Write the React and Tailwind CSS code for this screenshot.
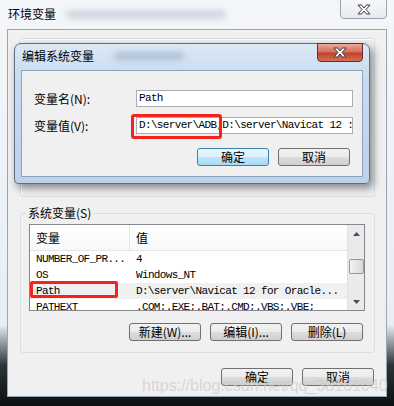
const CJK = "font-['Noto_Sans_CJK_SC',sans-serif]";
const MONO = "font-['Liberation_Mono',monospace] text-[11px] tracking-[-0.65px]";

const ROWS = [
  { name: "NUMBER_OF_PR...", value: "4" },
  { name: "OS", value: "Windows_NT" },
  { name: "Path", value: "D:\\server\\Navicat 12 for Oracle...", hl: true },
  { name: "PATHEXT", value: ".COM;.EXE;.BAT;.CMD;.VBS;.VBE;" },
];

function CloseX() {
  return (
    <svg width="14" height="11" viewBox="0 0 14 11">
      <path
        d="M1 1 H4.5 L7 4 L9.5 1 H13 L9 5.5 L13 10 H9.5 L7 7 L4.5 10 H1 L5 5.5 Z"
        fill="#fff"
        stroke="#3b3b3b"
        strokeWidth="1"
        strokeLinejoin="round"
      />
    </svg>
  );
}

function Btn({ children, focused, className = "" }) {
  return (
    <div
      className={`h-[18px] w-[72px] flex items-center justify-center rounded-[3px] border text-[12px] leading-none text-black ${CJK} ${
        focused
          ? "border-[#3c7fb1] bg-[linear-gradient(to_bottom,#eaf6fd_0%,#d9f0fc_50%,#bee6fd_51%,#a7d9f5_100%)]"
          : "border-[#707070] bg-[linear-gradient(to_bottom,#f2f2f2_0%,#ebebeb_50%,#dddddd_51%,#cfcfcf_100%)]"
      } ${className}`}
    >
      {children}
    </div>
  );
}

function Field({ label, value }) {
  return (
    <div className="flex items-center h-[17px]">
      <span className={`pl-[12px] w-[114px] text-[12px] leading-none text-black ${CJK}`}>{label}</span>
      <div className={`w-[217px] h-[17px] border border-[#abadb3] bg-white flex items-center pl-[2px] overflow-hidden whitespace-nowrap text-black ${MONO}`}>
        {value}
      </div>
    </div>
  );
}

function EditDialog() {
  return (
    <div className="absolute left-[14px] top-[43px] w-[356px] h-[141px] rounded-t-[7px] rounded-b-[4px] border border-[#5e6f85] bg-[linear-gradient(to_bottom,#dbe8f6_0%,#c7dbf0_25%,#bcd2ea_100%)] shadow-[3px_4px_8px_rgba(0,0,0,0.45)] flex flex-col">
      {/* title bar */}
      <div className="h-[26px] flex items-start relative">
        <span className={`ml-[7px] mt-[6px] text-[12px] leading-none text-black ${CJK}`}>编辑系统变量</span>
        <div className="ml-[20px] mt-[8px] w-[70px] h-[8px] rounded bg-[#9fb2c8] blur-[3px] opacity-70" />
        <div className="ml-auto mr-[6px] -mt-px w-[46px] h-[19px] rounded-b-[4px] border border-[#6b2a22] bg-[linear-gradient(to_bottom,#e9a99c_0%,#d7705d_45%,#c2432b_55%,#d0715c_100%)] flex items-center justify-center">
          <CloseX />
        </div>
      </div>
      {/* client */}
      <div className="mx-[6px] h-[107px] bg-[#f0f0f0] border border-[#8da2bd] flex flex-col">
        <div className="mt-[19px]">
          <Field label="变量名(N):" value="Path" />
        </div>
        <div className="mt-[10px]">
          <Field label="变量值(V):" value={"D:\\server\\ADB;D:\\server\\Navicat 12 :"} />
        </div>
        <div className="mt-[14px] flex justify-end gap-[9px] pr-[12px]">
          <Btn focused>确定</Btn>
          <Btn>取消</Btn>
        </div>
      </div>
    </div>
  );
}

function ListView() {
  return (
    <div className="ml-[8px] w-[336px] h-[87px] border border-[#828790] bg-white flex overflow-hidden">
      <div className="flex-1 flex flex-col">
        <div className={`h-[26px] shrink-0 flex items-center border-b border-[#e5e5e5] bg-[linear-gradient(to_bottom,#ffffff,#f7f8f9)] text-[12px] leading-none text-black ${CJK}`}>
          <span className="w-[100px] pl-[6px] h-full flex items-center border-r border-[#e5e5e5]">变量</span>
          <span className="pl-[6px]">值</span>
        </div>
        {ROWS.map((r) => (
          <div
            key={r.name}
            className={`h-[16px] shrink-0 flex items-center whitespace-nowrap text-black ${MONO} ${r.hl ? "bg-[#f0f0f0]" : ""}`}
          >
            <span className="w-[100px] pl-[6px]">{r.name}</span>
            <span className="pl-[6px]">{r.value}</span>
          </div>
        ))}
      </div>
      {/* scrollbar */}
      <div className="w-[17px] bg-[#eaeaea] border-l border-[#e0e0e0] flex flex-col items-center">
        <div className="h-[17px] flex items-center justify-center">
          <svg width="7" height="4" viewBox="0 0 7 4"><path d="M0 4 L3.5 0 L7 4 Z" fill="#4d4d4d" /></svg>
        </div>
        <div className="mt-[17px] w-[15px] h-[15px] rounded-[2px] border border-[#979797] bg-[linear-gradient(to_right,#f3f3f3,#d8d8d8)]" />
        <div className="mt-auto h-[17px] flex items-center justify-center">
          <svg width="7" height="4" viewBox="0 0 7 4"><path d="M0 0 L7 0 L3.5 4 Z" fill="#4d4d4d" /></svg>
        </div>
      </div>
    </div>
  );
}

export default function App() {
  return (
    <div className="relative w-[394px] h-[406px] overflow-hidden bg-[linear-gradient(to_bottom,#f4f6f9_0%,#e8eef4_80%,#2b3436_90%,#0b1012_100%)]">
      {/* outer title bar */}
      <div className="h-[29px] flex items-start">
        <span className={`ml-[8px] mt-[8px] text-[12px] leading-none text-black ${CJK}`}>环境变量</span>
        <div className="ml-[10px] mt-[10px] w-[160px] h-[9px] rounded bg-[#b7c3d0] blur-[3px] opacity-60" />
        <div className="ml-auto mr-[7px] -mt-px w-[47px] h-[20px] rounded-b-[4px] border border-[#9aa4ae] bg-[linear-gradient(to_bottom,#f7f8fa,#e6eaef)] flex items-center justify-center">
          <CloseX />
        </div>
      </div>

      {/* outer client */}
      <div className="mx-[7px] h-[368px] bg-[#f0f0f0] border border-[#9aa6b3] flex flex-col">
        {/* user variables group (mostly covered) */}
        <div className="ml-[12px] mt-[8px] w-[355px] h-[159px] rounded-[3px] border border-[#d5dfe5] shadow-[inset_1px_1px_0_#fff]" />

        {/* system variables group */}
        <fieldset className="ml-[12px] mt-[8px] w-[355px] rounded-[3px] border border-[#d5dfe5] pb-[11px]">
          <legend className={`ml-[5px] px-[2px] text-[12px] leading-[16px] text-black ${CJK}`}>系统变量(S)</legend>
          <div className="mt-[3px]">
            <ListView />
          </div>
          <div className="mt-[12px] flex justify-end gap-[9px] pr-[11px]">
            <Btn>新建(W)...</Btn>
            <Btn>编辑(I)...</Btn>
            <Btn>删除(L)</Btn>
          </div>
        </fieldset>

        <div className="mt-[15px] flex justify-end gap-[9px] pr-[12px]">
          <Btn>确定</Btn>
          <Btn>取消</Btn>
        </div>
      </div>

      <EditDialog />

      {/* highlight boxes */}
      <div className="absolute left-[131px] top-[114px] w-[91px] h-[25px] rounded-[3px] border-[3px] border-[#f5231b]" />
      <div className="absolute left-[30px] top-[281px] w-[88px] h-[17px] rounded-[2px] border-[3px] border-[#f5231b]" />

      {/* watermark */}
      <span className="absolute left-[142px] top-[378px] text-[16px] leading-none font-['Liberation_Sans',sans-serif] text-[rgba(205,205,205,0.75)]">
        https://blog.csdn.net/qq_38161040
      </span>
    </div>
  );
}
